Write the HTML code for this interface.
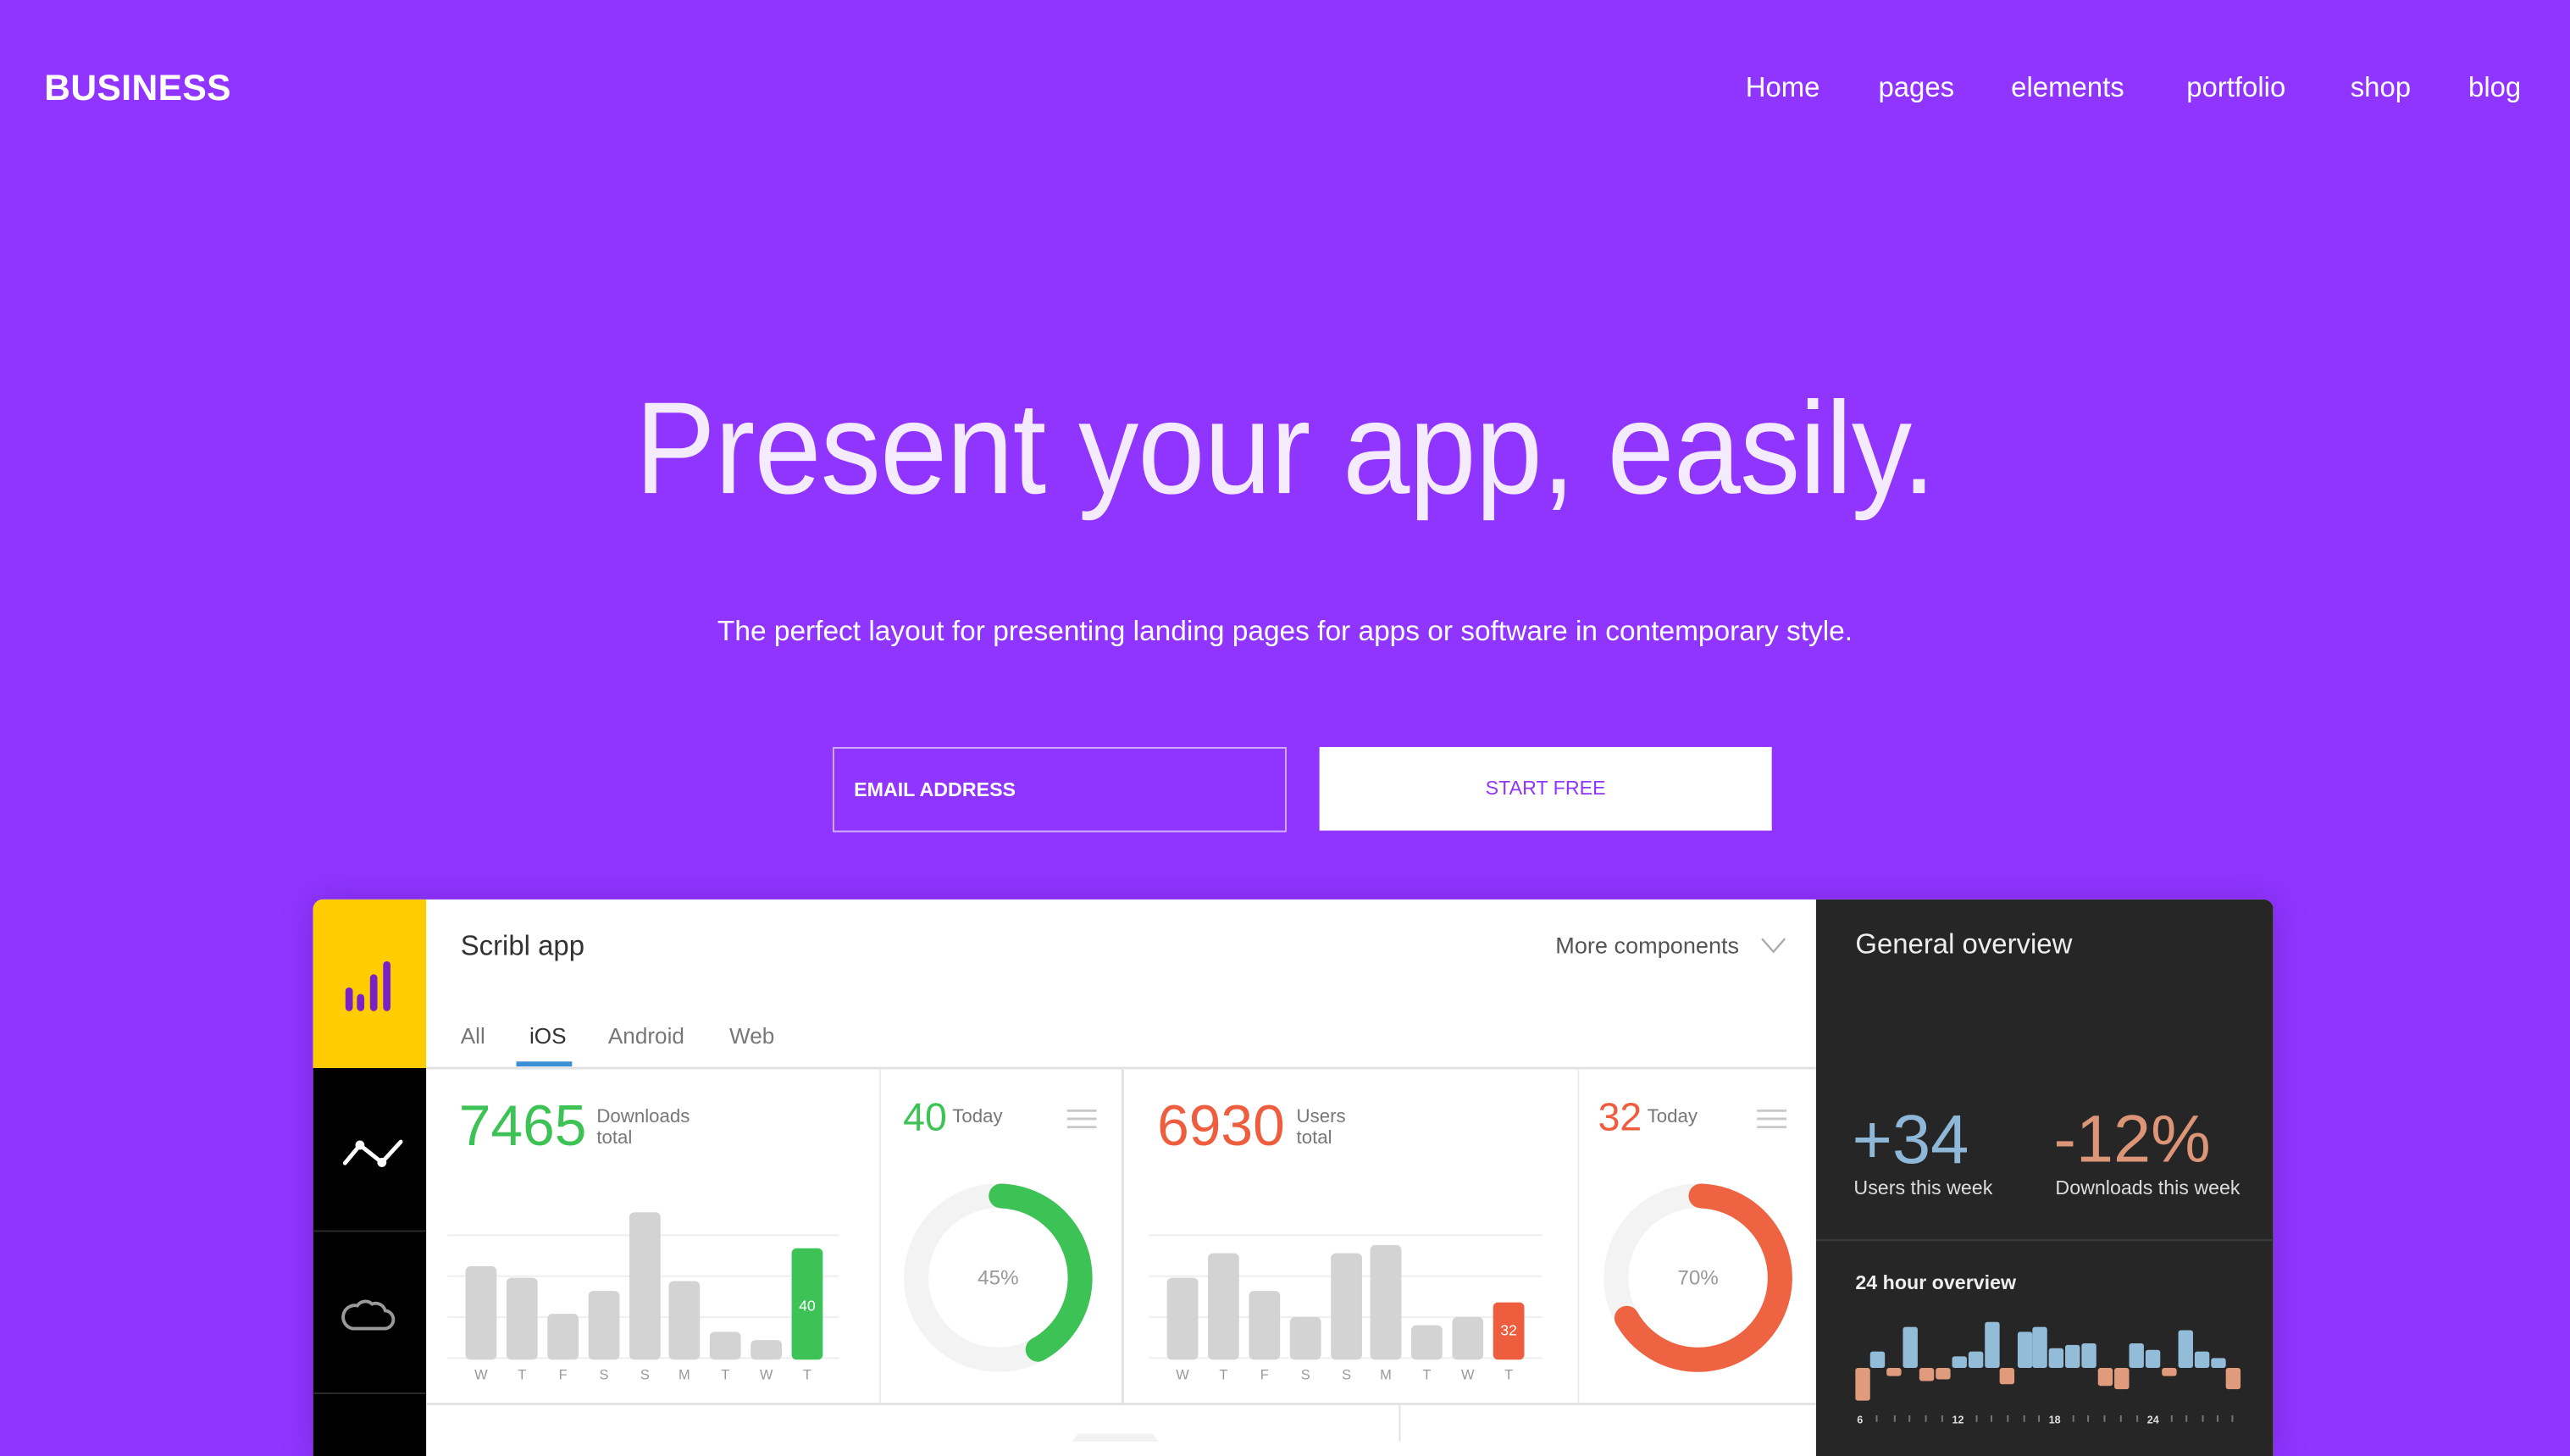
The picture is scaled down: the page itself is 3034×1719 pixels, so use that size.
<!DOCTYPE html>
<html><head><meta charset="utf-8"><style>
html,body{margin:0;padding:0;width:3034px;height:1702px;overflow:hidden;background:#9035ff;}
#s{position:absolute;left:0;top:0;width:1568px;height:880px;transform-origin:0 0;transform:scale(1.93495,1.93409);font-family:"Liberation Sans",sans-serif;color:#fff;}
.a{position:absolute;white-space:nowrap;}
.nav{top:44px;font-size:17px;}
.g{color:#3cc255}.r{color:#ee5d3e}
.lab{font-size:11.5px;color:#777;line-height:13px}
</style></head><body><div id="s">
<div class="a" style="left:27px;top:41px;font-size:22px;font-weight:bold;letter-spacing:0.2px">BUSINESS</div>
<div class="a nav" style="left:1065px">Home</div>
<div class="a nav" style="left:1146px">pages</div>
<div class="a nav" style="left:1227px">elements</div>
<div class="a nav" style="left:1334px">portfolio</div>
<div class="a nav" style="left:1434px">shop</div>
<div class="a nav" style="left:1506px">blog</div>

<div class="a" style="left:0;width:1568px;top:228px;text-align:center;"><span style="display:inline-block;font-size:80px;font-weight:300;color:rgba(255,255,255,0.9);transform:scaleX(0.92);letter-spacing:-0.5px">Present your app, easily.</span></div>
<div class="a" style="left:0;width:1568px;top:375px;text-align:center;font-size:17.3px;">The perfect layout for presenting landing pages for apps or software in contemporary style.</div>

<div class="a" style="left:508px;top:456px;width:275px;height:50px;border:1px solid rgba(255,255,255,0.6);"></div>
<div class="a" style="left:521px;top:475px;font-size:12px;font-weight:bold;">EMAIL ADDRESS</div>
<div class="a" style="left:805px;top:456px;width:276px;height:51px;background:#fff;color:#9035ff;font-size:12px;text-align:center;line-height:51px;">START FREE</div>

<div class="a" style="left:191px;top:549px;width:1196px;height:340px;border-radius:6px 6px 0 0;overflow:hidden;background:#fff;box-shadow:0 0 20px rgba(60,0,120,0.25)">
 <div class="a" style="left:0;top:0;width:69px;height:103px;background:#ffcc00"></div>
 <div class="a" style="left:0;top:103px;width:69px;height:240px;background:#000"></div>
 <div class="a" style="left:0;top:202px;width:69px;height:1px;background:#2a2a2a"></div>
 <div class="a" style="left:0;top:301px;width:69px;height:1px;background:#2a2a2a"></div>
 <div class="a" style="left:917px;top:0;width:279px;height:340px;background:#262626"></div>
</div>
<svg class="a" style="left:0;top:0" width="1568" height="880">
 <g stroke="#7a22c8" stroke-width="4.5" stroke-linecap="round">
  <line x1="213" y1="605" x2="213" y2="615"/><line x1="220" y1="609" x2="220" y2="615"/>
  <line x1="228" y1="597" x2="228" y2="615"/><line x1="236" y1="589" x2="236" y2="615"/>
 </g>
 <polyline points="210.5,710 219.6,699 233,709.6 244.5,697" fill="none" stroke="#fff" stroke-width="2.5" stroke-linecap="round" stroke-linejoin="round"/>
 <circle cx="219.6" cy="699" r="2.8" fill="#fff"/><circle cx="233" cy="709.6" r="2.8" fill="#fff"/>
 <path d="M215,811 H234 A5.5,5.5 0 0 0 235,800 A6,6 0 0 0 227,796 A6,6 0 0 0 218,797 A7,7 0 0 0 215,811 Z" fill="none" stroke="#999" stroke-width="2"/>
 <line x1="260" y1="652" x2="1108" y2="652" stroke="#e2e2e2" stroke-width="1.5"/>
 <line x1="315" y1="649.5" x2="349" y2="649.5" stroke="#3a8fd6" stroke-width="3"/>
 <line x1="537" y1="653" x2="537" y2="857" stroke="#ececec"/>
 <line x1="685" y1="653" x2="685" y2="857" stroke="#e2e2e2" stroke-width="1.5"/>
 <line x1="963" y1="653" x2="963" y2="857" stroke="#ececec"/>
 <line x1="260" y1="857" x2="1108" y2="857" stroke="#e2e2e2" stroke-width="1.5"/>
 <line x1="854" y1="857" x2="854" y2="880" stroke="#e2e2e2"/>
 <path d="M654,880 L658,875 H703 L707,880 Z" fill="#f2f2f2"/>
 <path d="M1075,573 L1082,581 L1089,573" fill="none" stroke="#aaa" stroke-width="1.2"/>
 <g stroke="#c8c8c8" stroke-width="1.5"><line x1="651" y1="678" x2="669" y2="678"/><line x1="651" y1="683" x2="669" y2="683"/><line x1="651" y1="688" x2="669" y2="688"/>
 <line x1="1072" y1="678" x2="1090" y2="678"/><line x1="1072" y1="683" x2="1090" y2="683"/><line x1="1072" y1="688" x2="1090" y2="688"/></g>
 <g stroke="#f0f0f0" stroke-width="1.2"><line x1="273" y1="754" x2="512" y2="754"/><line x1="273" y1="779" x2="512" y2="779"/><line x1="273" y1="804" x2="512" y2="804"/><line x1="273" y1="829" x2="512" y2="829"/>
 <line x1="701" y1="754" x2="941" y2="754"/><line x1="701" y1="779" x2="941" y2="779"/><line x1="701" y1="804" x2="941" y2="804"/><line x1="701" y1="829" x2="941" y2="829"/></g>
 <g fill="#d3d3d3">
  <rect x="284" y="773" width="19" height="57" rx="3"/><rect x="309" y="780" width="19" height="50" rx="3"/><rect x="334" y="802" width="19" height="28" rx="3"/><rect x="359" y="788" width="19" height="42" rx="3"/><rect x="384" y="740" width="19" height="90" rx="3"/><rect x="408" y="782" width="19" height="48" rx="3"/><rect x="433" y="813" width="19" height="17" rx="3"/><rect x="458" y="818" width="19" height="12" rx="3"/>
  <rect x="712" y="780" width="19" height="50" rx="3"/><rect x="737" y="765" width="19" height="65" rx="3"/><rect x="762" y="788" width="19" height="42" rx="3"/><rect x="787" y="804" width="19" height="26" rx="3"/><rect x="812" y="765" width="19" height="65" rx="3"/><rect x="836" y="760" width="19" height="70" rx="3"/><rect x="861" y="809" width="19" height="21" rx="3"/><rect x="886" y="804" width="19" height="26" rx="3"/>
 </g>
 <rect x="483" y="762" width="19" height="68" rx="3" fill="#3cc255"/>
 <rect x="911" y="795" width="19" height="35" rx="3" fill="#ee5d3e"/>
 <text x="492.5" y="800" font-size="9" fill="#fff" text-anchor="middle" font-family="Liberation Sans">40</text>
 <text x="920.5" y="815" font-size="9" fill="#fff" text-anchor="middle" font-family="Liberation Sans">32</text>
 <g font-size="8.5" fill="#999" text-anchor="middle" font-family="Liberation Sans">
  <text x="293.5" y="842">W</text><text x="318.5" y="842">T</text><text x="343.5" y="842">F</text><text x="368.5" y="842">S</text><text x="393.5" y="842">S</text><text x="417.5" y="842">M</text><text x="442.5" y="842">T</text><text x="467.5" y="842">W</text><text x="492.5" y="842">T</text>
  <text x="721.5" y="842">W</text><text x="746.5" y="842">T</text><text x="771.5" y="842">F</text><text x="796.5" y="842">S</text><text x="821.5" y="842">S</text><text x="845.5" y="842">M</text><text x="870.5" y="842">T</text><text x="895.5" y="842">W</text><text x="920.5" y="842">T</text>
 </g>
 <circle cx="609" cy="780" r="50" fill="none" stroke="#f3f3f3" stroke-width="15"/>
 <circle cx="609" cy="780" r="50" fill="none" stroke="#3cc255" stroke-width="15" stroke-linecap="round" stroke-dasharray="130 400" transform="rotate(-88 609 780)"/>
 <text x="609" y="784" font-size="12.5" fill="#999" text-anchor="middle" font-family="Liberation Sans">45%</text>
 <circle cx="1036" cy="780" r="50" fill="none" stroke="#f3f3f3" stroke-width="15"/>
 <circle cx="1036" cy="780" r="50" fill="none" stroke="#ee6442" stroke-width="15" stroke-linecap="round" stroke-dasharray="208 400" transform="rotate(-88 1036 780)"/>
 <text x="1036" y="784" font-size="12.5" fill="#999" text-anchor="middle" font-family="Liberation Sans">70%</text>
 <line x1="1108" y1="757" x2="1387" y2="757" stroke="#3a3a3a" stroke-width="1.2"/>
 <g fill="#93bcd9">
  <rect x="1141" y="825" width="9" height="10" rx="1.5"/><rect x="1161" y="810" width="9" height="25" rx="1.5"/><rect x="1191" y="828" width="9" height="7" rx="1.5"/><rect x="1201" y="825" width="9" height="10" rx="1.5"/><rect x="1211" y="807" width="9" height="28" rx="1.5"/><rect x="1231" y="813" width="9" height="22" rx="1.5"/><rect x="1240" y="810" width="9" height="25" rx="1.5"/><rect x="1250" y="823" width="9" height="12" rx="1.5"/><rect x="1260" y="821" width="9" height="14" rx="1.5"/><rect x="1270" y="820" width="9" height="15" rx="1.5"/><rect x="1299" y="820" width="9" height="15" rx="1.5"/><rect x="1309" y="824" width="9" height="11" rx="1.5"/><rect x="1329" y="812" width="9" height="23" rx="1.5"/><rect x="1339" y="825" width="9" height="10" rx="1.5"/><rect x="1349" y="829" width="9" height="6" rx="1.5"/>
 </g>
 <g fill="#e09a7c">
  <rect x="1132" y="835" width="9" height="20" rx="1.5"/><rect x="1151" y="835" width="9" height="5" rx="1.5"/><rect x="1171" y="835" width="9" height="8" rx="1.5"/><rect x="1181" y="835" width="9" height="7" rx="1.5"/><rect x="1220" y="835" width="9" height="10" rx="1.5"/><rect x="1280" y="835" width="9" height="11" rx="1.5"/><rect x="1290" y="835" width="9" height="13" rx="1.5"/><rect x="1319" y="835" width="9" height="5" rx="1.5"/><rect x="1358" y="835" width="9" height="13" rx="1.5"/>
 </g>
 <g font-size="6.5" fill="#ddd" font-weight="bold" font-family="Liberation Sans"><text x="1133" y="869">6</text><text x="1191" y="869">12</text><text x="1250" y="869">18</text><text x="1310" y="869">24</text></g>
 <g stroke="#777" stroke-width="1"><path d="M1145,864v4M1156,864v4M1165,864v4M1175,864v4M1185,864v4M1206,864v4M1215,864v4M1225,864v4M1235,864v4M1244,864v4M1265,864v4M1274,864v4M1284,864v4M1294,864v4M1304,864v4M1325,864v4M1334,864v4M1344,864v4M1353,864v4M1362,864v4"/></g>
</svg>
<div class="a" style="left:281px;top:568px;font-size:17px;color:#333">Scribl app</div>
<div class="a" style="left:949px;top:569px;font-size:14px;color:#555">More components</div>
<div class="a" style="left:281px;top:625px;font-size:13.5px;color:#777">All</div>
<div class="a" style="left:323px;top:625px;font-size:13.5px;color:#333">iOS</div>
<div class="a" style="left:371px;top:625px;font-size:13.5px;color:#777">Android</div>
<div class="a" style="left:445px;top:625px;font-size:13.5px;color:#777">Web</div>
<div class="a g" style="left:280px;top:668px;font-size:35px;font-weight:300;">7465</div>
<div class="a lab" style="left:364px;top:676px">Downloads<br>total</div>
<div class="a g" style="left:551px;top:669px;font-size:24px;">40</div>
<div class="a lab" style="left:581px;top:676px">Today</div>
<div class="a r" style="left:706px;top:668px;font-size:35px;">6930</div>
<div class="a lab" style="left:791px;top:676px">Users<br>total</div>
<div class="a r" style="left:975px;top:669px;font-size:24px;">32</div>
<div class="a lab" style="left:1005px;top:676px">Today</div>
<div class="a" style="left:1132px;top:567px;font-size:17px;color:#eee">General overview</div>
<div class="a" style="left:1130px;top:672px;font-size:42px;color:#8fb8d8;font-weight:300">+34</div>
<div class="a" style="left:1253px;top:672px;font-size:41px;color:#dc9677;font-weight:300">-12%</div>
<div class="a" style="left:1131px;top:718px;font-size:12px;color:#ddd">Users this week</div>
<div class="a" style="left:1254px;top:718px;font-size:12px;color:#ddd">Downloads this week</div>
<div class="a" style="left:1132px;top:776px;font-size:12px;color:#eee;font-weight:bold">24 hour overview</div>
</div></body></html>
